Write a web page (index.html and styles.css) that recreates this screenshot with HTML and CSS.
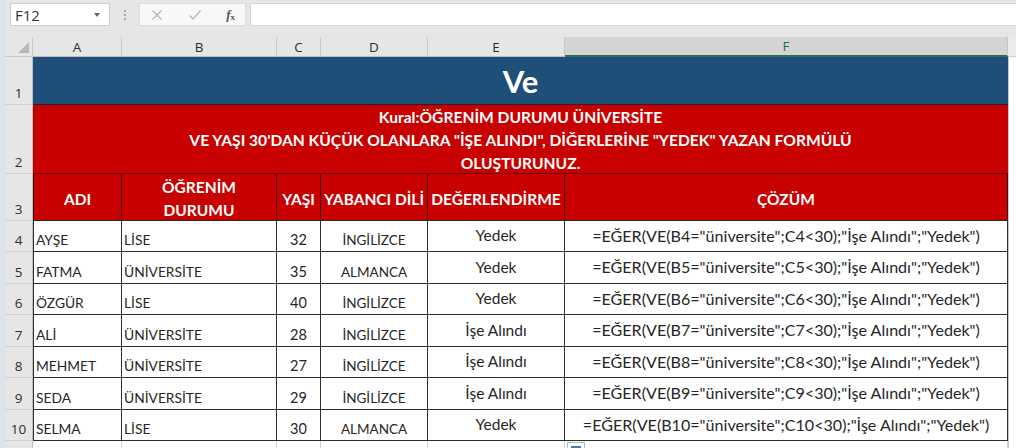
FILE: index.html
```html
<!DOCTYPE html>
<html lang="tr">
<head>
<meta charset="utf-8">
<title>Ve</title>
<link rel="stylesheet" href="styles.css">
</head>
<body>
<div class="app">
  <div class="edge"></div>
  <div class="main">
    <div class="toolbar">
      <div class="namebox"><span class="nb-text">F12</span><span class="caret"></span></div>
      <div class="grip"><i></i><i></i><i></i></div>
      <div class="fbuttons">
        <svg class="ico" width="12" height="12" viewBox="0 0 12 12"><path d="M1.5 1.5 L10.5 10.5 M10.5 1.5 L1.5 10.5" stroke="#b4b4b4" stroke-width="1.2" fill="none"/></svg>
        <svg class="ico" width="14" height="12" viewBox="0 0 14 12"><path d="M1.5 6.5 L5 10 L12.5 1.5" stroke="#b4b4b4" stroke-width="1.2" fill="none"/></svg>
        <span class="fx"><i>f</i><sub>x</sub></span>
      </div>
      <div class="finput"></div>
    </div>
    <div class="sheet">
      <div class="corner"><span class="tri"></span></div>
      <div class="ch">A</div>
      <div class="ch">B</div>
      <div class="ch">C</div>
      <div class="ch">D</div>
      <div class="ch">E</div>
      <div class="ch ch-sel">F</div>
      <div class="ch-fill"></div>

      <div class="rh">1</div>
      <div class="title">Ve</div>
      <div class="fill"></div>

      <div class="rh">2</div>
      <div class="rule">Kural:ÖĞRENİM DURUMU ÜNİVERSİTE<br>VE YAŞI 30'DAN KÜÇÜK OLANLARA "İŞE ALINDI", DİĞERLERİNE "YEDEK" YAZAN FORMÜLÜ<br>OLUŞTURUNUZ.</div>
      <div class="fill"></div>

      <div class="rh">3</div>
      <div class="th th-first">ADI</div>
      <div class="th">ÖĞRENİM<br>DURUMU</div>
      <div class="th">YAŞI</div>
      <div class="th">YABANCI DİLİ</div>
      <div class="th">DEĞERLENDİRME</div>
      <div class="th">ÇÖZÜM</div>
      <div class="fill"></div>

      <div class="rh">4</div>
      <div class="td td-first left">AYŞE</div>
      <div class="td left">LİSE</div>
      <div class="td num">32</div>
      <div class="td lang">İNGİLİZCE</div>
      <div class="td res">Yedek</div>
      <div class="td formula">=EĞER(VE(B4="üniversite";C4&lt;30);"İşe Alındı";"Yedek")</div>
      <div class="fill"></div>

      <div class="rh">5</div>
      <div class="td td-first left">FATMA</div>
      <div class="td left">ÜNİVERSİTE</div>
      <div class="td num">35</div>
      <div class="td lang">ALMANCA</div>
      <div class="td res">Yedek</div>
      <div class="td formula">=EĞER(VE(B5="üniversite";C5&lt;30);"İşe Alındı";"Yedek")</div>
      <div class="fill"></div>

      <div class="rh">6</div>
      <div class="td td-first left">ÖZGÜR</div>
      <div class="td left">LİSE</div>
      <div class="td num">40</div>
      <div class="td lang">İNGİLİZCE</div>
      <div class="td res">Yedek</div>
      <div class="td formula">=EĞER(VE(B6="üniversite";C6&lt;30);"İşe Alındı";"Yedek")</div>
      <div class="fill"></div>

      <div class="rh">7</div>
      <div class="td td-first left">ALİ</div>
      <div class="td left">ÜNİVERSİTE</div>
      <div class="td num">28</div>
      <div class="td lang">İNGİLİZCE</div>
      <div class="td res">İşe Alındı</div>
      <div class="td formula">=EĞER(VE(B7="üniversite";C7&lt;30);"İşe Alındı";"Yedek")</div>
      <div class="fill"></div>

      <div class="rh">8</div>
      <div class="td td-first left">MEHMET</div>
      <div class="td left">ÜNİVERSİTE</div>
      <div class="td num">27</div>
      <div class="td lang">İNGİLİZCE</div>
      <div class="td res">İşe Alındı</div>
      <div class="td formula">=EĞER(VE(B8="üniversite";C8&lt;30);"İşe Alındı";"Yedek")</div>
      <div class="fill"></div>

      <div class="rh">9</div>
      <div class="td td-first left">SEDA</div>
      <div class="td left">ÜNİVERSİTE</div>
      <div class="td num">29</div>
      <div class="td lang">İNGİLİZCE</div>
      <div class="td res">İşe Alındı</div>
      <div class="td formula">=EĞER(VE(B9="üniversite";C9&lt;30);"İşe Alındı";"Yedek")</div>
      <div class="fill"></div>

      <div class="rh">10</div>
      <div class="td td-first left">SELMA</div>
      <div class="td left">LİSE</div>
      <div class="td num">30</div>
      <div class="td lang">ALMANCA</div>
      <div class="td res">Yedek</div>
      <div class="td formula">=EĞER(VE(B10="üniversite";C10&lt;30);"İşe Alındı";"Yedek")</div>
      <div class="fill"></div>

      <div class="rh rh-last"></div>
      <div class="ec"></div>
      <div class="ec"></div>
      <div class="ec"></div>
      <div class="ec"></div>
      <div class="ec"></div>
      <div class="ec ec-f"><span class="autofill"><span class="af-in"></span></span></div>
      <div class="fill"></div>
    </div>
  </div>
</div>
</body>
</html>
```

FILE: styles.css
```css
* { box-sizing: border-box; }
html, body { margin: 0; padding: 0; }
body {
  width: 1016px;
  height: 448px;
  overflow: hidden;
  background: #ffffff;
  font-family: "Lato", "Open Sans", sans-serif;
  color: #262626;
}
.app {
  display: flex;
  height: 448px;
}
.edge {
  width: 5px;
  flex: none;
  background: #dce3eb;
}
.main {
  flex: 1;
  display: flex;
  flex-direction: column;
  min-width: 0;
}
.toolbar {
  height: 37px;
  flex: none;
  background: #e6e6e6;
  display: flex;
  align-items: flex-start;
  padding: 3px 0 0 5px;
}
.namebox {
  width: 100px;
  height: 23px;
  background: #fff;
  border: 1px solid #cfcfcf;
  display: flex;
  align-items: center;
  justify-content: space-between;
  padding: 0 9px 0 4px;
  font-family: "Open Sans", sans-serif;
  font-size: 15px;
  color: #333;
}
.caret {
  width: 0;
  height: 0;
  border-left: 3px solid transparent;
  border-right: 3px solid transparent;
  border-top: 4px solid #666;
}
.grip {
  width: 29px;
  height: 23px;
  display: flex;
  flex-direction: column;
  align-items: center;
  justify-content: center;
  gap: 2px;
}
.grip i {
  width: 2px;
  height: 2px;
  background: #a8a8a8;
}
.fbuttons {
  width: 107px;
  height: 23px;
  background: #f8f8f8;
  border: 1px solid #dcdcdc;
  display: flex;
  align-items: center;
  justify-content: space-between;
  padding: 0 10px 0 11px;
}
.fx {
  font-family: "Liberation Serif", serif;
  font-size: 13px;
  color: #555;
  font-weight: bold;
}
.fx sub { font-size: 9px; vertical-align: -1px; }
.finput {
  flex: 1;
  margin-left: 4px;
  height: 23px;
  background: #fff;
  border: 1px solid #d6d6d6;
  border-right: none;
}
.sheet {
  flex: 1;
  display: grid;
  grid-template-columns: 28px 89px 155px 44px 107px 137px 443px 1fr;
  grid-template-rows: 20px 48px 69px 47px 31px 32px 31px 32px 31px 32px 31px 1fr;
  position: relative;
}
.corner {
  background: #e6e6e6;
  border-right: 1px solid #c8c8c8;
  border-bottom: 1px solid #c8c8c8;
  position: relative;
}
.tri {
  position: absolute;
  right: 3px;
  bottom: 3px;
  width: 0;
  height: 0;
  border-left: 11px solid transparent;
  border-bottom: 11px solid #b9b9b9;
}
.ch {
  background: #e6e6e6;
  border-right: 1px solid #c8c8c8;
  border-bottom: 1px solid #bdbdbd;
  display: flex;
  align-items: center;
  justify-content: center;
  font-family: "Open Sans", sans-serif;
  font-size: 13.5px;
  color: #2e2e2e;
}
.ch-sel {
  background: #d4d4d4;
  border-bottom: 2px solid #2a6e55;
  color: #217346;
}
.ch-fill {
  background: #ebebeb;
  border-bottom: 1px solid #cfcfcf;
}
.rh {
  background: #e6e6e6;
  border-right: 1px solid #c0c0c0;
  border-bottom: 1px solid #d2d2d2;
  display: flex;
  align-items: flex-end;
  justify-content: center;
  padding-bottom: 2px;
  font-family: "Open Sans", sans-serif;
  font-size: 13.5px;
  color: #2e2e2e;
}
.rh-last { border-bottom: none; }
.fill {
  background: #fff;
  border-left: 1px solid #c8c8c8;
}
.title {
  grid-column: 2 / span 6;
  background: #1f4e79;
  border-bottom: 1px solid #2a1f24;
  color: #fff;
  font-weight: 700;
  font-size: 31px;
  display: flex;
  align-items: center;
  justify-content: center;
  padding-top: 1px;
}
.rule {
  grid-column: 2 / span 6;
  background: #c80000;
  border-bottom: 1px solid #6b0000;
  color: #fff;
  font-weight: 700;
  font-size: 15.6px;
  line-height: 23px;
  text-align: center;
  display: flex;
  align-items: center;
  justify-content: center;
  padding-top: 3px;
}
.th {
  background: #c80000;
  color: #fff;
  font-weight: 700;
  font-size: 15.5px;
  line-height: 23px;
  text-align: center;
  border-right: 1px solid #3c0a0a;
  border-bottom: 1px solid #2a2a2a;
  display: flex;
  align-items: center;
  justify-content: center;
  padding-top: 4px;
}
.th-first { border-left: 1px solid #3c0a0a; }
.td {
  border-right: 1px solid #2e2e2e;
  border-bottom: 1px solid #2e2e2e;
  display: flex;
  align-items: flex-end;
  padding-bottom: 3px;
  font-size: 13.8px;
  white-space: nowrap;
}
.td-first { border-left: 1px solid #2e2e2e; }
.left { padding-left: 2px; }
.num { justify-content: center; font-size: 14.5px; }
.lang { justify-content: center; font-size: 13.5px; }
.res { justify-content: center; align-items: center; padding-bottom: 2px; font-size: 15.5px; }
.formula { justify-content: center; align-items: center; padding-bottom: 2px; font-size: 16.1px; }
.ec {
  border-right: 1px solid #d4d4d4;
}
.ec-f { position: relative; }
.autofill {
  position: absolute;
  left: 2px;
  top: 1px;
  width: 18px;
  height: 18px;
  background: #fff;
  border: 1px solid #b8b8b8;
}
.af-in {
  position: absolute;
  left: 3px;
  top: 3px;
  width: 10px;
  height: 8px;
  background: #4a78b8;
}
```
